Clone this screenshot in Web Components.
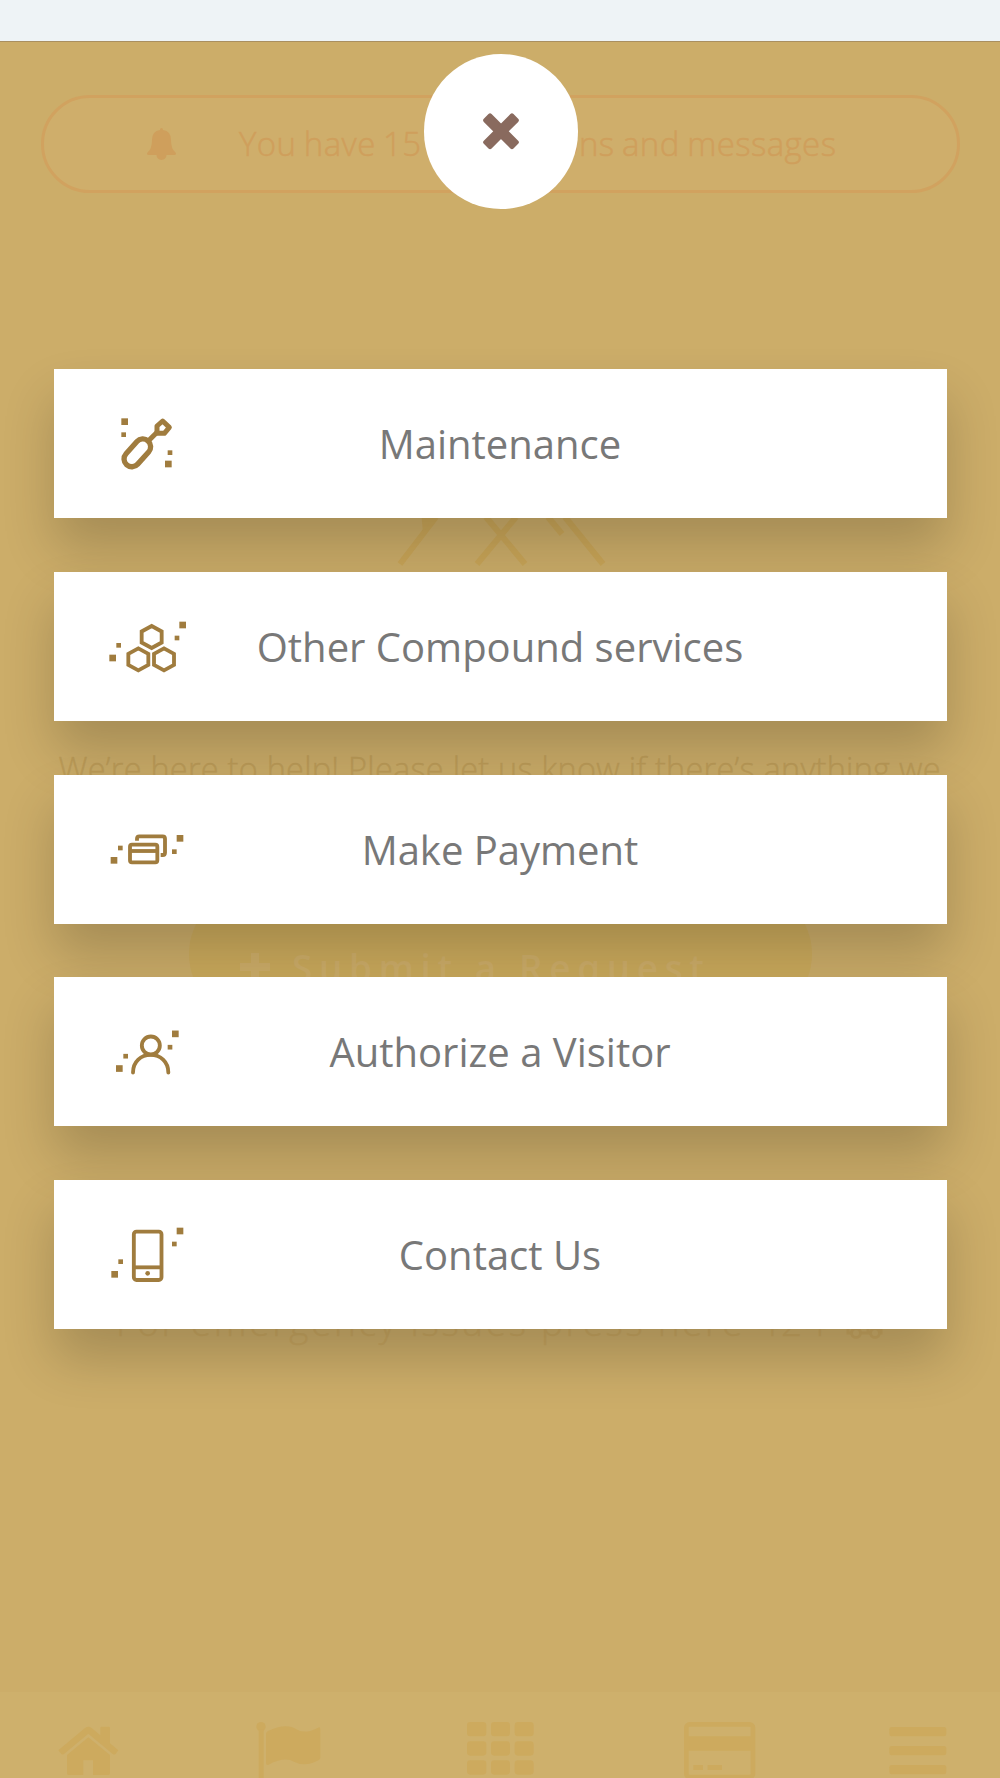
<!DOCTYPE html>
<html lang="en">
<head>
<meta charset="utf-8">
<title>Quick actions</title>
<style>
html,body{margin:0;height:1778px;overflow:hidden;background:#ccad69}
body{font-family:"Open Sans","Noto Sans",sans-serif}
</style>
</head>
<body>
<app-screen></app-screen>
<script>
const define = (name, html, ready) => customElements.define(name, class extends HTMLElement {
  connectedCallback() {
    if (this.shadowRoot) return;
    this.attachShadow({mode: 'open'}).innerHTML = typeof html === 'function' ? html(this) : html;
    if (ready) ready(this);
  }
});

/* One line of text, tracked so that it fills the width given in "measure". */
define('fit-text', `<style>
  :host{display:block;white-space:nowrap;line-height:1}
  span{display:inline-block}
</style><span><slot></slot></span>`, el => {
  const span = el.shadowRoot.querySelector('span');
  const want = parseFloat(el.getAttribute('measure'));
  const have = span.getBoundingClientRect().width;
  span.style.letterSpacing = ((want - have) / (el.textContent.length - 1)) + 'px';
});

define('notice-pill', `<style>
  :host{display:flex;box-sizing:border-box;width:919px;height:98px;margin:53px 0 0 40.500px;border:3px solid #d1a25f;
    border-radius:50px;background:#cfae6b;color:#cf9f5c;align-items:center;padding-left:103.500px}
  svg{width:29px;height:32px;flex:none;margin-right:63px}
  fit-text{font-weight:300;font-size:33px;word-spacing:-1.500px;margin-top:-2px;-webkit-text-stroke:.5px #cf9f5c}
</style>
<svg viewBox="0 0 29 32"><path fill="currentColor" d="M14.500 0Q16 0 16 2Q24 3 24 12Q24 21 28.500 24.500Q30 27 27 27H19.500A5 5 0 0 1 9.500 27H2Q-1 27 .5 24.500Q5 21 5 12Q5 3 13 2Q13 0 14.500 0Z"/></svg>
<fit-text measure="597">You have 15 notifications and messages</fit-text>`);

define('service-mark', `<style>:host{display:block;height:90px;margin-top:290px}svg{display:block;width:1000px;height:90px}</style>
<svg viewBox="0 483 1000 90" fill="none" stroke="#caa658" stroke-width="6">
  <path d="M400 564L436 517M477 564L516 517M525 564L486 517M548 517L562 534M565 517L603 564"/>
  <path d="M421 510H438L423 533Z" fill="#caa658" stroke="none"/>
</svg>`);

define('request-button', `<style>
  :host{display:flex;box-sizing:border-box;width:623px;height:132px;margin:103px 0 0 189px;border-radius:66px;background:#cbaa5c;
    color:#ceae69;padding:58px 0 0 51px}
  svg{width:30px;height:30px;margin:6px 22px 0 0;flex:none}
  fit-text{font-size:37px;font-weight:600;margin-top:3px}
</style>
<svg viewBox="0 0 30 30"><path fill="currentColor" d="M11 1h8v10h11v8H19v11h-8V19H0v-8h11z"/></svg>
<fit-text measure="412">Submit a Request</fit-text>`);

define('tab-bar', `<style>
  :host{display:block;height:86px;margin-top:auto;background:#ceb06c}
  svg{display:block;width:1000px;height:86px}
</style>
<svg viewBox="0 96 3000 258" fill="#cdaa5e">
  <path d="M175 271L255 204Q265 196 275 204L301 226V204Q301 200 305 200H326Q330 200 330 204V250L355 271L346 283Q342 285 338 282L265 221L192 282Q188 285 184 282Z"/>
  <path d="M201 285L265 232L330 285V340Q330 345 325 345H279V301H250V345H206Q201 345 201 340Z"/>
  <circle cx="783" cy="200" r="14"/><path d="M776 208H791V360H776Z"/>
  <path d="M798 222Q798 216 804 213Q858 187 892 209Q916 223 954 203Q961 200 961 207V293Q961 298 955 301Q916 323 882 305Q854 289 806 314Q798 317 798 309Z"/>
  <rect x="1401" y="186" width="58" height="43" rx="10"/><rect x="1473" y="186" width="57" height="43" rx="10"/><rect x="1544" y="186" width="57" height="43" rx="10"/>
  <rect x="1401" y="244" width="58" height="43" rx="10"/><rect x="1473" y="244" width="57" height="43" rx="10"/><rect x="1544" y="244" width="57" height="43" rx="10"/>
  <rect x="1401" y="301" width="58" height="43" rx="10"/><rect x="1473" y="301" width="57" height="43" rx="10"/><rect x="1544" y="301" width="57" height="43" rx="10"/>
  <rect x="2059" y="193" width="200" height="158" rx="10" fill="none" stroke="#cdaa5e" stroke-width="14"/>
  <path d="M2059 229H2259V272H2059ZM2080 315H2109V330H2080ZM2123 315H2166V330H2123Z"/>
  <rect x="2668" y="201" width="171" height="28" rx="7"/><rect x="2668" y="258" width="171" height="28" rx="7"/><rect x="2668" y="315" width="171" height="28" rx="7"/>
</svg>`);

define('home-page', `<style>
  :host{display:flex;flex-direction:column;height:1778px;box-sizing:border-box;background:#ccad69}
  .status{height:41px;flex:none;background:#eef3f6;border-bottom:1px solid #a98f60}
  notice-pill,service-mark,request-button,tab-bar,.help,.sos{flex-shrink:0}
  .help{margin:180px 0 0 58.500px;font-size:32.500px;font-weight:300;color:#bf9e59;height:32px;-webkit-text-stroke:.4px #bf9e59}
  .sos{display:flex;margin:283px 0 0 116px;height:36px;color:#c7a55f}
  .sos fit-text{font-size:37px;font-weight:300;-webkit-text-stroke:.3px #c7a55f}
  .sos svg{width:37px;height:32px;margin:4px 0 0 17px}
</style>
<div class="status"></div>
<notice-pill></notice-pill>
<service-mark></service-mark>
<fit-text class="help" measure="882">We’re here to help! Please let us know if there’s anything we</fit-text>
<request-button></request-button>
<div class="sos"><fit-text measure="710">For emergency issues press here 424</fit-text>
<svg viewBox="0 0 37 32" fill="none" stroke="currentColor" stroke-width="3"><path d="M5 26H2V4H22V26H15M22 10H30L35 17V26H33M25 26H22"/><circle cx="10" cy="26" r="4.500"/><circle cx="29" cy="26" r="4.500"/></svg></div>
<tab-bar></tab-bar>`);

const sq = (x, y, s) => `<rect x="${x - s / 2}" y="${y - s / 2}" width="${s}" height="${s}" fill="#a07c3e" stroke="none"/>`;
const hex = (x, y) => `<path d="M${x} ${y - 33}L${x + 30} ${y - 16.5}V${y + 16.5}L${x} ${y + 33}L${x - 30} ${y + 16.5}V${y - 16.5}Z"/>`;
/* Each icon: the space above its drawing, then its shapes. */
const icons = {
  driver: [91, sq(104, 67, 20) + sq(101, 106, 14) + sq(240, 160, 14) + sq(235, 194, 20) +
    `<rect x="-48" y="-23.500" width="96" height="47" rx="23.500" transform="translate(142 160.500) rotate(-48)" stroke-width="16"/>
     <path d="M174 126L202 98" stroke-width="15"/><path d="M218 65L238 84L223 102H201L201 80Z" stroke-width="15" stroke-linejoin="round"/>`],
  hexes: [84, sq(68, 174, 20) + sq(86, 136, 14) + sq(278, 75, 20) + sq(261, 114, 14) + hex(185, 111) + hex(145, 178) + hex(222, 178)],
  cards: [105, sq(72, 151, 20) + sq(91, 114, 14) + sq(270, 85, 20) + sq(253, 125, 14) +
    `<rect x="120" y="104" width="82" height="53" rx="6"/><path d="M120 123H202"/><path d="M141 92V86Q141 79 148 79H218Q225 79 225 86V128Q225 135 218 135H212"/>`],
  person: [99.6, sq(88, 175, 20) + sq(107, 138, 14) + sq(256, 71, 20) + sq(240, 111, 14) +
    `<circle cx="182.500" cy="106" r="27"/><path d="M129 187C129 154 153 134 182 134S235 154 235 187" stroke-linecap="round"/>`],
  phone: [89, sq(74, 194, 20) + sq(92, 156, 14) + sq(270, 64, 20) + sq(253, 103, 14) +
    `<rect x="131.500" y="66" width="83" height="145" rx="8"/><path d="M131 173H215"/><circle cx="173" cy="191" r="7" fill="#a07c3e" stroke="none"/>`]
};

define('menu-card', el => {
  const [above, body] = icons[el.getAttribute('icon')];
  return `<style>
  :host{display:grid;grid-template-columns:120px 1fr 120px;align-items:center;box-sizing:border-box;height:149.200px;
    padding:0 36px;background:#fff;box-shadow:0 30px 52px rgba(0,0,0,.19);color:#787878;font-size:40px;text-align:center}
  svg{display:block;width:120px;height:149px}
  span{white-space:nowrap;line-height:54px;padding-top:1px}
</style><svg viewBox="0 ${-above} 360 447" fill="none" stroke="#a07c3e" stroke-width="11.500">${body}</svg><span><slot></slot></span>`;
});

define('close-button', `<style>
  :host{display:flex;width:154.500px;height:154.500px;border-radius:50%;background:#fff;align-items:center;justify-content:center}
  svg{width:50px;height:50px}
</style><svg viewBox="-25 -24.300 50 50" fill="#896a5e"><rect x="-21" y="-5.500" width="42" height="11" rx="2.200" transform="rotate(45)"/><rect x="-21" y="-5.500" width="42" height="11" rx="2.200" transform="rotate(-45)"/></svg>`);

define('action-menu', `<style>
  :host{display:flex;flex-direction:column;align-items:center;padding-top:54.300px;box-sizing:border-box}
  close-button{margin-left:1.500px}
  .list{display:flex;flex-direction:column;gap:53.500px;width:893px;margin-top:160.400px}
</style>
<close-button></close-button>
<div class="list"><slot></slot></div>`);

define('app-screen', `<style>
  :host{display:block;position:relative;width:1000px;height:1778px;overflow:hidden}
  action-menu{position:absolute;inset:0}
</style>
<home-page></home-page>
<action-menu>
  <menu-card icon="driver">Maintenance</menu-card>
  <menu-card icon="hexes">Other Compound services</menu-card>
  <menu-card icon="cards">Make Payment</menu-card>
  <menu-card icon="person">Authorize a Visitor</menu-card>
  <menu-card icon="phone">Contact Us</menu-card>
</action-menu>`);
</script>
</body>
</html>
